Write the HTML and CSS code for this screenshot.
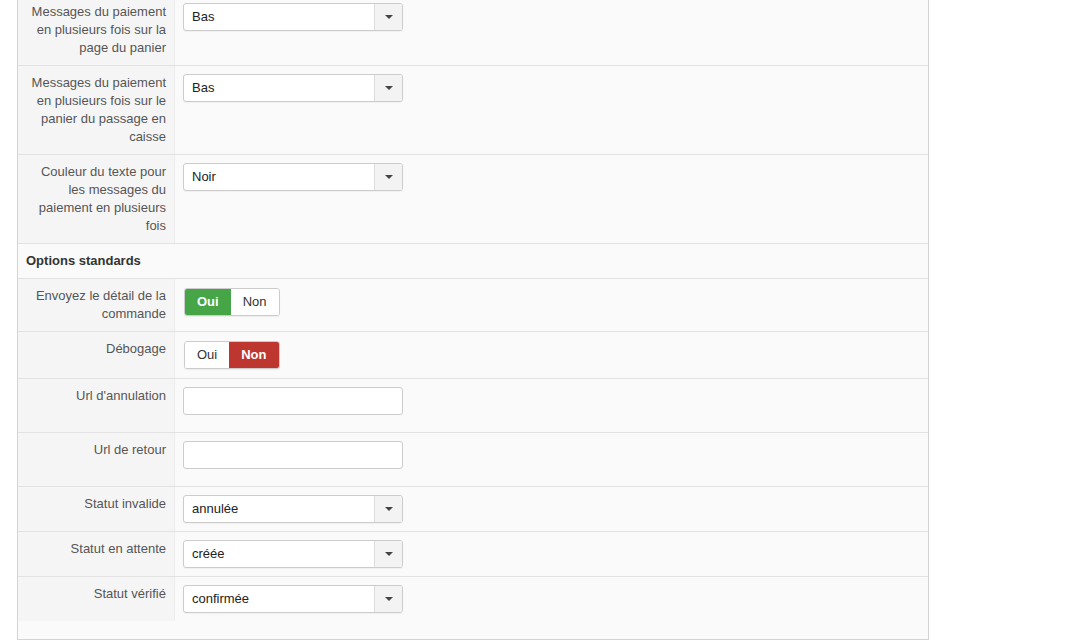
FILE: index.html
```html
<!DOCTYPE html>
<html lang="fr">
<head>
    <meta charset="UTF-8">
    <meta name="viewport" content="width=device-width, initial-scale=1.0">
    <title>Paramètres du paiement</title>
    <link rel="stylesheet" href="styles.css">
</head>
<body>
    <div class="panel">
        <div class="params">
            <div class="row">
                <div class="label">Messages du paiement en plusieurs fois sur la page du panier</div>
                <div class="field">
                    <div class="select"><span class="value">Bas</span><span class="arrow"><b></b></span></div>
                </div>
            </div>
            <div class="row">
                <div class="label">Messages du paiement en plusieurs fois sur le panier du passage en caisse</div>
                <div class="field">
                    <div class="select"><span class="value">Bas</span><span class="arrow"><b></b></span></div>
                </div>
            </div>
            <div class="row">
                <div class="label">Couleur du texte pour les messages du paiement en plusieurs fois</div>
                <div class="field">
                    <div class="select"><span class="value">Noir</span><span class="arrow"><b></b></span></div>
                </div>
            </div>
            <div class="row section">
                <div class="section-title">Options standards</div>
            </div>
            <div class="row">
                <div class="label">Envoyez le détail de la commande</div>
                <div class="field">
                    <div class="toggle">
                        <span class="btn yes active">Oui</span><span class="btn">Non</span>
                    </div>
                </div>
            </div>
            <div class="row">
                <div class="label">Débogage</div>
                <div class="field">
                    <div class="toggle">
                        <span class="btn">Oui</span><span class="btn no active">Non</span>
                    </div>
                </div>
            </div>
            <div class="row">
                <div class="label">Url d'annulation</div>
                <div class="field">
                    <input type="text" class="text-input">
                </div>
            </div>
            <div class="row">
                <div class="label">Url de retour</div>
                <div class="field">
                    <input type="text" class="text-input">
                </div>
            </div>
            <div class="row">
                <div class="label">Statut invalide</div>
                <div class="field">
                    <div class="select"><span class="value">annulée</span><span class="arrow"><b></b></span></div>
                </div>
            </div>
            <div class="row">
                <div class="label">Statut en attente</div>
                <div class="field">
                    <div class="select"><span class="value">créée</span><span class="arrow"><b></b></span></div>
                </div>
            </div>
            <div class="row">
                <div class="label">Statut vérifié</div>
                <div class="field">
                    <div class="select"><span class="value">confirmée</span><span class="arrow"><b></b></span></div>
                </div>
            </div>
        </div>
    </div>
</body>
</html>
```

FILE: styles.css
```css
body {
    margin: 0;
    font-family: "Liberation Sans", Arial, sans-serif;
    font-size: 13px;
    line-height: 18px;
    color: #333;
    background-color: #fff;
}
.panel {
    box-sizing: border-box;
    width: 912px;
    margin: -7px 0 0 17px;
    border: 1px solid #d4d4d4;
    background-color: #fafafa;
}
.params {
    margin-bottom: 18px;
}
.row {
    display: flex;
    border-top: 1px solid #e2e2e2;
}
.label {
    box-sizing: border-box;
    flex: 0 0 157px;
    padding: 8px 8px;
    text-align: right;
    color: #555;
    background-color: #f5f5f5;
    border-right: 1px solid #ececec;
}
.field {
    flex: 1;
    padding: 8px;
}
.section-title {
    padding: 8px;
    font-weight: bold;
    color: #333;
}
.select {
    box-sizing: border-box;
    display: flex;
    width: 220px;
    height: 28px;
    border: 1px solid #ccc;
    border-radius: 3px;
    background-color: #fff;
    box-shadow: 0 1px 1px rgba(0, 0, 0, 0.04);
}
.select .value {
    flex: 1;
    padding: 4px 8px;
    color: #222;
}
.select .arrow {
    display: flex;
    align-items: center;
    justify-content: center;
    width: 27px;
    border-left: 1px solid #ddd;
    border-radius: 0 2px 2px 0;
    background-color: #f3f3f3;
}
.select .arrow b {
    width: 0;
    height: 0;
    margin-top: -1px;
    border-top: 4px solid #444;
    border-left: 4px solid transparent;
    border-right: 4px solid transparent;
}
.toggle {
    display: inline-flex;
    margin: 1px 0 1px 1px;
    border: 1px solid #ccc;
    border-radius: 3px;
    box-shadow: 0 1px 1px rgba(0, 0, 0, 0.06);
}
.toggle .btn {
    padding: 4px 12px;
    line-height: 18px;
    color: #333;
    background-color: #fff;
}
.toggle .btn:first-child {
    border-radius: 2px 0 0 2px;
}
.toggle .btn:last-child {
    border-radius: 0 2px 2px 0;
}
.toggle .btn.active {
    font-weight: bold;
    color: #fff;
}
.toggle .btn.yes {
    background-color: #46a546;
}
.toggle .btn.no {
    background-color: #bd362f;
}
.text-input {
    box-sizing: border-box;
    display: block;
    width: 220px;
    height: 28px;
    margin: 0 0 9px;
    padding: 4px 6px;
    border: 1px solid #ccc;
    border-radius: 3px;
    background-color: #fff;
    font: inherit;
}
```
